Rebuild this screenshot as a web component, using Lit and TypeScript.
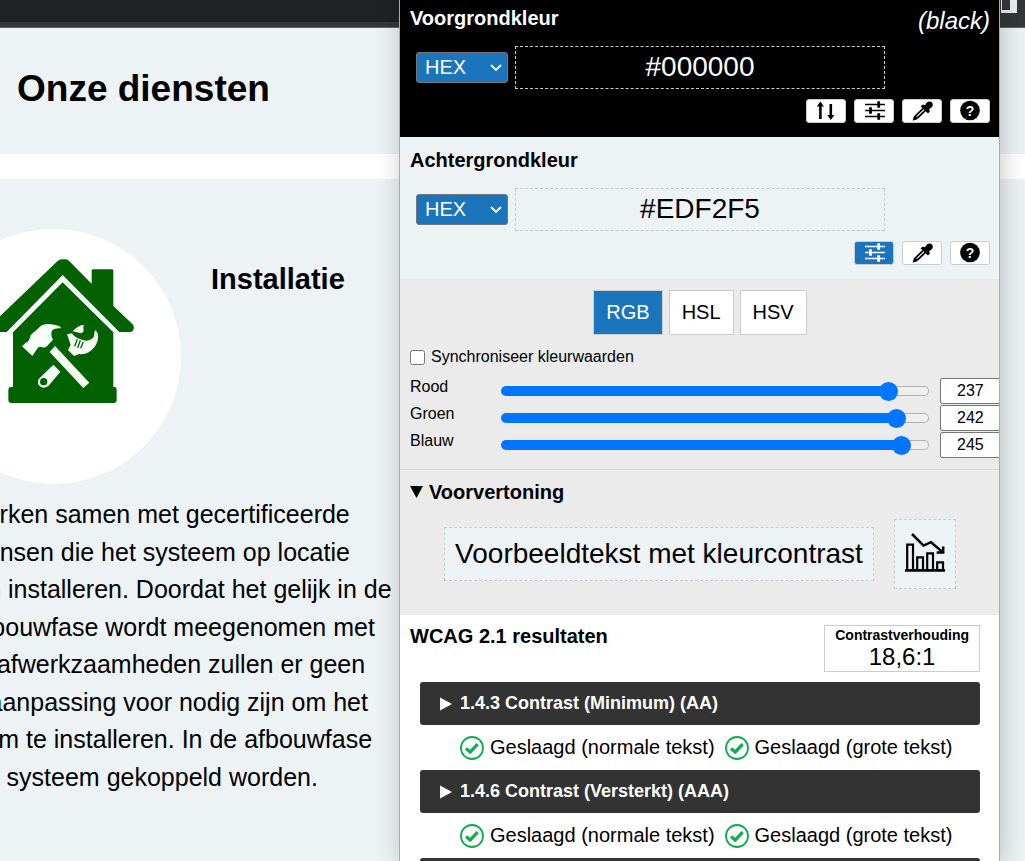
import { LitElement, html, css, svg, nothing } from "lit";
import { customElement, property, state } from "lit/decorators.js";
import { classMap } from "lit/directives/class-map.js";
import { styleMap } from "lit/directives/style-map.js";

const icons = {
  swap: svg`<path d="M14.4 20V6M24.8 5V17" stroke="currentColor" stroke-width="2.6"/><path d="M14.4 2.4L18 7.4H10.8ZM24.8 21L21.2 16H28.4Z" fill="currentColor"/>`,
  sliders: svg`<path d="M11 5.5H22M27 5.5H31M11 11.5H14M19 11.5H31M11 17.5H22M27 17.5H31" stroke="currentColor" stroke-width="1.4"/><path d="M24.7 2.2V8.8M16.5 8.2V14.8M24.7 14.2V20.8" stroke="currentColor" stroke-width="2.8"/><path d="M22 5.5H27M14 11.5H19M22 17.5H27" stroke="currentColor" stroke-width="1.4"/>`,
  dropper: svg`<path d="M21 9.6L14 16.4L12.4 20L16 18.4L23.4 11.4" fill="none" stroke="currentColor" stroke-width="1.8"/><path d="M10.8 21.3L12.2 16.6L15.6 20.2Z" fill="currentColor"/><path d="M18.6 7.2L20.9 5.6L23 6.2L24.6 3.8Q27.6 1.2 30 3.4Q31.8 5.8 29.6 8.4L27.2 10L27.8 12.4L26 14.6Z" fill="currentColor"/>`,
  help: svg`<circle cx="20" cy="11.5" r="9.8" fill="currentColor"/><text x="20" y="16.6" text-anchor="middle" font-size="14" font-weight="700" font-family="Liberation Sans, Arial, sans-serif" fill="#fff">?</text>`,
};

type IconName = keyof typeof icons;

const labels: Record<IconName, string> = {
  swap: "Kleuren omwisselen",
  sliders: "Schuifregelaars",
  dropper: "Kleur kiezen",
  help: "Help",
};

/** One colour picker block: title, notation, value and tool buttons. */
@customElement("color-block")
export class ColorBlock extends LitElement {
  @property() heading = "";
  @property() value = "";
  @property() colorName = "";
  @property() active = "";
  @property({ attribute: false }) tools: IconName[] = [];

  static styles = css`
    :host {
      display: block;
      padding: 11px 9px 14px 10px;
    }
    .top {
      display: flex;
      justify-content: space-between;
      height: 24px;
    }
    h2 {
      margin: 0;
      font-size: 20px;
      line-height: 24px;
    }
    .name {
      font-size: 24px;
      line-height: 30px;
      font-style: italic;
    }
    .form {
      display: flex;
      align-items: center;
      gap: 7px;
      margin: 16px 105px 10px 6px;
    }
    .pick {
      position: relative;
      flex: none;
    }
    select {
      display: block;
      appearance: none;
      width: 92px;
      height: 31px;
      padding: 0 8px 2px;
      border: 1px solid #767676;
      border-radius: 3px;
      background: #1b75bc;
      color: #fff;
      font: inherit;
      font-size: 20px;
    }
    .pick svg {
      position: absolute;
      right: 6px;
      top: 11px;
      pointer-events: none;
    }
    .value {
      box-sizing: border-box;
      flex: 1;
      min-width: 0;
      height: 43px;
      padding: 0 0 2px;
      border: 1px dashed #ccc;
      background: transparent;
      color: inherit;
      font: inherit;
      font-size: 28px;
      text-align: center;
    }
    .tools {
      display: flex;
      justify-content: flex-end;
      gap: 8px;
    }
    .tools button {
      display: block;
      width: 40px;
      height: 24px;
      padding: 0;
      border: 1px solid #ccc;
      border-radius: 3px;
      background: #fff;
      color: #000;
    }
    .tools .on {
      background: #1b75bc;
      color: #fff;
    }
    .tools svg {
      display: block;
      margin: -1px;
    }
  `;

  render() {
    return html`
      <div class="top">
        <h2>${this.heading}</h2>
        ${this.colorName ? html`<span class="name">(${this.colorName})</span>` : nothing}
      </div>
      <div class="form">
        <div class="pick">
          <select aria-label="Notatie">
            <option>HEX</option>
          </select>
          <svg width="12" height="9" viewBox="0 0 12 9"><path d="M1 2L6 7L11 2" fill="none" stroke="#fff" stroke-width="1.8" /></svg>
        </div>
        <input class="value" type="text" aria-label=${this.heading} .value=${this.value} />
      </div>
      <div class="tools">
        ${this.tools.map(
          (t) => html`<button type="button" aria-label=${labels[t]} class=${classMap({ on: t === this.active })}>
            <svg width="40" height="24" viewBox="0 0 40 24">${icons[t]}</svg>
          </button>`
        )}
      </div>
    `;
  }
}

/** The floating contrast analyser window. */
@customElement("contrast-window")
export class ContrastWindow extends LitElement {
  @state() private channels = [
    { id: "r", name: "Rood", value: 237 },
    { id: "g", name: "Groen", value: 242 },
    { id: "b", name: "Blauw", value: 245 },
  ];

  static styles = css`
    :host {
      display: block;
      background: #fff;
      color: #000;
      overflow: hidden;
      font-family: "Liberation Sans", Arial, sans-serif;
    }
    .fg {
      padding-top: 6px;
      background: #000;
      color: #fff;
    }
    .bg {
      background: #edf2f5;
    }
    .mix {
      padding: 11px 0 10px 10px;
      background: #ebebeb;
      border-bottom: 1px solid #d8d8d8;
      overflow: hidden;
    }
    .tabs {
      display: flex;
      justify-content: center;
      gap: 6px;
      margin-right: 9px;
    }
    .tabs button {
      height: 45px;
      padding: 0 12px;
      border: 1px solid #ccc;
      background: #fff;
      color: #000;
      font: inherit;
      font-size: 20px;
    }
    .tabs .on {
      background: #1b75bc;
      color: #fff;
    }
    .sync {
      display: flex;
      align-items: center;
      gap: 6px;
      height: 20px;
      margin: 12px 0 11px;
      font-size: 16px;
    }
    .sync input {
      width: 15px;
      height: 15px;
      margin: 0;
    }
    .channel {
      display: grid;
      grid-template-columns: 80px 1fr 78px;
      column-gap: 11px;
      height: 27px;
      margin-right: -19px;
      font-size: 16px;
    }
    .channel label {
      line-height: 18px;
    }
    .channel .range {
      appearance: none;
      width: 100%;
      height: 26px;
      margin: 0;
      background: transparent;
    }
    .range::-webkit-slider-runnable-track {
      box-sizing: border-box;
      height: 10px;
      border: 1px solid transparent;
      border-radius: 5px;
      background:
        linear-gradient(#0075ff, #0075ff) 0 0 / var(--fill) 100% no-repeat border-box,
        linear-gradient(#efefef, #efefef) padding-box,
        linear-gradient(#b2b2b2, #b2b2b2) border-box;
    }
    .range::-webkit-slider-thumb {
      appearance: none;
      width: 19px;
      height: 19px;
      margin: -5px -1px 0;
      border-radius: 50%;
      background: #0075ff;
    }
    .number {
      box-sizing: border-box;
      height: 26px;
      padding: 0 16px;
      border: 1px solid #767676;
      border-radius: 2px;
      font: inherit;
    }
    .number::-webkit-inner-spin-button {
      appearance: none;
    }
    .preview {
      padding: 10px 9px 26px 10px;
      background: #ebebeb;
    }
    summary {
      display: flex;
      align-items: center;
      gap: 6px;
      list-style: none;
      font-weight: 700;
    }
    .preview summary {
      font-size: 20px;
      line-height: 24px;
    }
    .samples {
      display: flex;
      justify-content: center;
      align-items: center;
      gap: 20px;
      padding-top: 15px;
    }
    .sample {
      border: 1px dashed #ccc;
      background: #edf2f5;
      padding: 10px;
      font-size: 28px;
      line-height: 32px;
    }
    .chart {
      line-height: 0;
      padding: 12px 10px 16px;
    }
    .results {
      padding: 10px 19px 10px 20px;
    }
    .summary {
      display: flex;
      justify-content: space-between;
      margin: 0 0 10px -10px;
    }
    h2 {
      margin: 0;
      font-size: 20px;
      line-height: 22px;
    }
    .ratio {
      padding: 1px 10px 0;
      border: 1px solid #ccc;
      text-align: center;
      font-size: 24px;
      line-height: 28px;
    }
    .ratio b {
      display: block;
      font-size: 14px;
      line-height: 16px;
    }
    .rule summary {
      height: 43px;
      padding: 0 20px;
      gap: 8px;
      border-radius: 3px;
      background: #333;
      color: #fff;
      font-size: 18px;
    }
    ul {
      display: flex;
      gap: 10px;
      height: 45px;
      margin: 0;
      padding: 0 0 0 40px;
      list-style: none;
      font-size: 20px;
      white-space: nowrap;
    }
    li {
      display: flex;
      align-items: center;
      gap: 6px;
    }
  `;

  private setChannel(id: string, e: Event) {
    const value = Number((e.target as HTMLInputElement).value);
    this.channels = this.channels.map((c) => (c.id === id ? { ...c, value } : c));
  }

  private channelRow(c: { id: string; name: string; value: number }) {
    return html`<div class="channel">
      <label for=${c.id}>${c.name}</label>
      <input
        class="range"
        id=${c.id}
        type="range"
        min="0"
        max="255"
        .value=${String(c.value)}
        style=${styleMap({ "--fill": `calc(10px + (100% - 19px) * ${c.value / 255})` })}
        @input=${(e: Event) => this.setChannel(c.id, e)}
      />
      <input class="number" type="number" aria-label=${c.name} .value=${String(c.value)} @input=${(e: Event) => this.setChannel(c.id, e)} />
    </div>`;
  }

  private pass(text: string) {
    return html`<li>
      <svg width="24" height="24" viewBox="0 0 24 24">
        <circle cx="12" cy="12" r="11" fill="#fff" stroke="#0bad4e" stroke-width="1.8" />
        <path d="M6 12.6L10.2 16L17.6 8.2" fill="none" stroke="#0bad4e" stroke-width="3.2" />
      </svg>
      <span>${text}</span>
    </li>`;
  }

  private rule(title: string) {
    return html`<details class="rule">
        <summary>
          <svg width="12" height="14" viewBox="0 0 12 14"><path d="M0 .5L12 7L0 13.5Z" fill="#fff" /></svg>
          <span>${title}</span>
        </summary>
      </details>
      <ul>
        ${this.pass("Geslaagd (normale tekst)")} ${this.pass("Geslaagd (grote tekst)")}
      </ul>`;
  }

  render() {
    return html`
      <color-block class="fg" heading="Voorgrondkleur" value="#000000" colorName="black" .tools=${["swap", "sliders", "dropper", "help"]}></color-block>
      <color-block class="bg" heading="Achtergrondkleur" value="#EDF2F5" active="sliders" .tools=${["sliders", "dropper", "help"]}></color-block>
      <section class="mix">
        <div class="tabs">
          <button type="button" class="on">RGB</button>
          <button type="button">HSL</button>
          <button type="button">HSV</button>
        </div>
        <label class="sync"><input type="checkbox" />Synchroniseer kleurwaarden</label>
        ${this.channels.map((c) => this.channelRow(c))}
      </section>
      <details class="preview" open>
        <summary>
          <svg width="13" height="12" viewBox="0 0 13 12"><path d="M0 0H13L6.5 12Z" /></svg>
          <span>Voorvertoning</span>
        </summary>
        <div class="samples">
          <div class="sample">Voorbeeldtekst met kleurcontrast</div>
          <div class="sample chart">
            <svg width="40" height="40" viewBox="0 0 40 40" fill="none" stroke="#000" stroke-width="2.2">
              <path d="M0 38.4H40" stroke-width="2.6" />
              <path d="M2.2 38V12.6H8V38M12.2 38V25.4H18V38M22.2 38V21.4H28V38M32.2 38V30.4H38V38" />
              <path d="M7 2L18.5 13.6L26 10.2L38 20.4M38.2 14.6V20.6H31.6" stroke-width="2.5" />
            </svg>
          </div>
        </div>
      </details>
      <section class="results">
        <div class="summary">
          <h2>WCAG 2.1 resultaten</h2>
          <div class="ratio"><b>Contrastverhouding</b>18,6:1</div>
        </div>
        ${this.rule("1.4.3 Contrast (Minimum) (AA)")} ${this.rule("1.4.6 Contrast (Versterkt) (AAA)")}
        <details class="rule"><summary></summary></details>
      </section>
    `;
  }
}

@customElement("app-root")
export class AppRoot extends LitElement {
  static styles = css`
    :host {
      display: block;
      position: relative;
      height: 100vh;
      overflow: hidden;
      background: #edf2f5;
      color: #000;
      font-family: "Liberation Sans", Arial, sans-serif;
    }
    .browser {
      display: flex;
      align-items: flex-start;
      height: 27px;
      background: #35363a;
      border-bottom: 1px solid #606164;
    }
    .strip {
      flex: 1;
      height: 22px;
      background: #202124;
    }
    .side {
      width: 25px;
    }
    .side svg {
      display: block;
    }
    .title {
      padding: 36px 17px 40px;
      border-bottom: 25px solid #fff;
    }
    h1 {
      margin: 0;
      font-size: 37px;
      line-height: 50px;
    }
    .service {
      display: flex;
      gap: 30px;
      padding-top: 50px;
      margin-left: -74px;
    }
    .badge {
      flex: none;
      width: 255px;
      height: 255px;
      border-radius: 50%;
      background: #fff;
    }
    h3 {
      margin: 32px 0 0;
      font-size: 29px;
      line-height: 36px;
    }
    p {
      margin: 12px 0 0 -74px;
      font-size: 25px;
      line-height: 1.5;
      white-space: pre;
    }
    .window {
      position: absolute;
      top: 0;
      bottom: 0;
      right: 25px;
      width: 599px;
      border: solid #a8acaf;
      border-width: 0 1px;
      box-shadow: 2px 4px 24px rgba(0, 0, 0, 0.22);
    }
  `;

  private lines = [
    "Wij werken samen met gecertificeerde",
    "vakmensen die het systeem op locatie",
    "komen installeren. Doordat het gelijk in de",
    "nieuwbouwfase wordt meegenomen met",
    "de graafwerkzaamheden zullen er geen",
    "extra aanpassing voor nodig zijn om het",
    "systeem te installeren. In de afbouwfase",
    "kan dit systeem gekoppeld worden.",
  ];

  render() {
    return html`
      <div class="browser">
        <div class="strip"></div>
        <div class="side">
          <svg width="17" height="13" viewBox="0 0 17 13"><path d="M1 0H17V13H1Z" fill="#e8eaed" /><path d="M2 0H10V10H2Z" fill="#35363a" /></svg>
        </div>
      </div>
      <main>
        <div class="title"><h1>Onze diensten</h1></div>
        <section>
          <div class="service">
            <svg class="badge" viewBox="-222 27 765 765" aria-hidden="true">
              <g fill="#026202">
                <path d="M-24 312L172 124Q178 118 188 118H196Q204 118 208 124L275 191V152Q275 148 280 148H336Q340 148 340 152V258L397 312Q403 318 401 326Q400 335 390 336H358L188 165L20 336H-18Q-32 330-24 312Z" />
                <path d="M188 187L340 337V500Q350 500 350 510V540Q350 549 341 549H34Q25 549 25 540V510Q25 500 39 500V337Z" />
              </g>
              <g fill="#f6fdf4">
                <path d="M66 379L97 408L109 390Q115 378 125 381Q138 386 144 375L159 359Q149 341 158 329Q167 323 183 325Q184 320 175 317Q135 306 119 321L92 345Q88 366 77 368Z" />
                <path d="M165 378L268 488L250 504L149 396Z" />
                <path d="M160 434L181 455L147 496Q136 507 123 501Q109 492 116 477Z" />
                <path d="M201 343L216 340Q223 352 242 358Q264 369 281 351L285 330Q297 337 294 358Q289 382 266 397Q250 405 238 402L222 408L204 390L212 374Z" />
                <path d="M218 334Q231 317 251 314Q249 325 251 334L244 340Z" />
              </g>
              <circle cx="131" cy="485" r="11" fill="#026202" />
              <path d="M232 358L224 379M241 361L233 383M250 365L242 385" stroke="#026202" stroke-width="4" />
            </svg>
            <h3>Installatie</h3>
          </div>
          <p>${this.lines.join("\n")}</p>
        </section>
      </main>
      <contrast-window class="window"></contrast-window>
    `;
  }
}
